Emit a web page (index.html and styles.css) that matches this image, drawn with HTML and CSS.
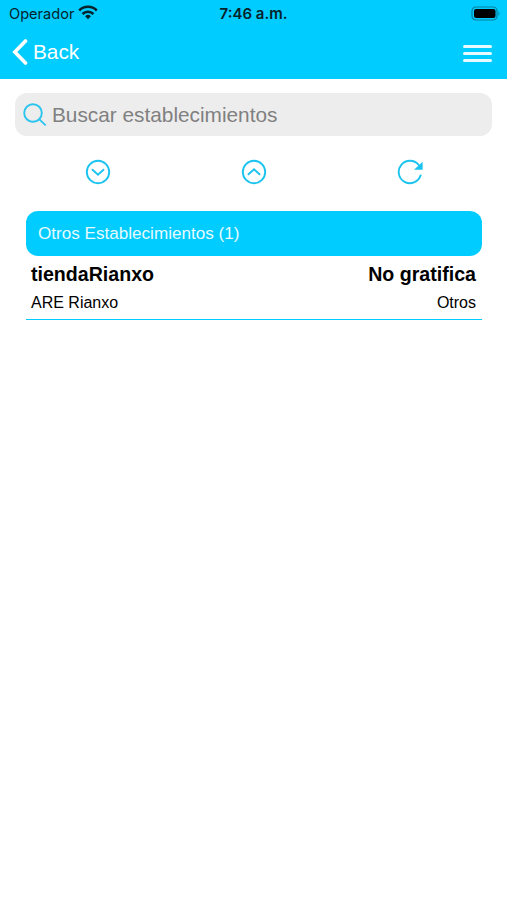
FILE: index.html
```html
<!DOCTYPE html>
<html lang="es">
<head>
    <meta charset="UTF-8">
    <meta name="viewport" content="width=device-width, initial-scale=1.0">
    <title>Establecimientos</title>
    <link rel="stylesheet" href="styles.css">
</head>
<body>

    <header class="header">
        <div class="status-bar">
            <div class="carrier">
                <span>Operador</span>
                <svg class="wifi" width="20" height="15" viewBox="0 0 20 15">
                    <g fill="none" stroke="#06222a" stroke-width="2.5">
                        <path d="M1.2 5.5a12.4 12.4 0 0 1 17.6 0"/>
                        <path d="M4.5 9a7.8 7.8 0 0 1 11 0"/>
                    </g>
                    <path d="M7.1 11.3a4.1 4.1 0 0 1 5.8 0L10 14.2z" fill="#06222a"/>
                </svg>
            </div>
            <div class="clock">7:46 a.m.</div>
            <svg class="battery" width="30" height="15" viewBox="0 0 30 15">
                <rect x="1" y="1" width="25" height="13" rx="4" fill="none" stroke="#087f9f" stroke-width="1.2"/>
                <rect x="3" y="3" width="21.5" height="9" rx="2" fill="#000"/>
                <path d="M27.5 5.2q2 2.3 0 4.6z" fill="#087f9f"/>
            </svg>
        </div>
        <nav class="nav-bar">
            <a class="back">
                <svg width="16" height="26" viewBox="0 0 16 26">
                    <path d="M13.5 2L2.8 13l10.7 11" fill="none" stroke="#fff" stroke-width="3.6" stroke-linecap="round"/>
                </svg>
                <span>Back</span>
            </a>
            <div class="menu">
                <span></span>
                <span></span>
                <span></span>
            </div>
        </nav>
    </header>

    <main class="content">
        <div class="search">
            <svg width="24" height="24" viewBox="0 0 24 24">
                <g fill="none" stroke="#2cc5ef" stroke-width="1.9">
                    <circle cx="10" cy="10" r="8.8"/>
                    <path d="M16.1 16.1l6.6 6.3"/>
                </g>
            </svg>
            <input type="text" placeholder="Buscar establecimientos">
        </div>

        <div class="actions">
            <svg width="26" height="26" viewBox="0 0 26 26">
                <circle cx="13" cy="13" r="11.2"/>
                <path d="M7.5 10.7l5.5 5.1 5.5-5.1"/>
            </svg>
            <svg width="26" height="26" viewBox="0 0 26 26">
                <circle cx="13" cy="13" r="11.2"/>
                <path d="M7.5 15.3l5.5-5.1 5.5 5.1"/>
            </svg>
            <svg width="26" height="26" viewBox="0 0 26 26">
                <path d="M23.6 16.4A11.2 11.2 0 1 1 21.6 5.9"/>
                <path class="arrow" d="M25.6 2.8v8h-8.6z"/>
            </svg>
        </div>

        <section class="group">
            <h2 class="group-title">Otros Establecimientos (1)</h2>
            <div class="shop">
                <div class="shop-row shop-name">
                    <span>tiendaRianxo</span>
                    <span>No gratifica</span>
                </div>
                <div class="shop-row shop-info">
                    <span>ARE Rianxo</span>
                    <span>Otros</span>
                </div>
            </div>
        </section>
    </main>

</body>
</html>
```
FILE: styles.css
```css
* {
    box-sizing: border-box;
}
body {
    margin: 0;
    background: white;
    color: black;
    font-family: "Liberation Sans", Arial, sans-serif;
}
svg {
    display: block;
    flex-shrink: 0;
}
.header {
    height: 79px;
    background: #00ccff;
}
.status-bar {
    display: grid;
    grid-template-columns: 1fr auto 1fr;
    align-items: center;
    height: 27px;
    padding: 0 6px 0 9px;
    font-family: Inter, sans-serif;
    font-size: 14.6px;
    color: #06222a;
}
.carrier {
    display: flex;
    align-items: center;
    gap: 4px;
}
.wifi {
    margin-top: -2px;
}
.clock {
    margin-right: 3px;
    font-weight: 600;
    font-size: 15px;
}
.battery {
    justify-self: end;
}
.nav-bar {
    display: flex;
    justify-content: space-between;
    align-items: center;
    height: 50px;
    padding: 0 15px 0 12px;
}
.back {
    display: flex;
    align-items: center;
    gap: 5px;
    font-size: 20.8px;
    color: white;
}
.menu {
    display: flex;
    flex-direction: column;
    gap: 4px;
    width: 29px;
    margin-top: 2px;
}
.menu span {
    height: 3px;
    border-radius: 2px;
    background: #e6faff;
}
.content {
    padding: 14px 15px 0;
}
.search {
    display: flex;
    align-items: center;
    gap: 5px;
    height: 43px;
    padding: 0 8px;
    border-radius: 12px;
    background: #ededed;
}
.search input {
    flex: 1;
    padding: 0;
    border: none;
    outline: none;
    background: none;
    font-family: inherit;
    font-size: 20.8px;
}
.search input::placeholder {
    color: #808080;
}
.actions {
    display: flex;
    justify-content: space-around;
    align-items: center;
    height: 72px;
    padding: 0 4px 0 5px;
}
.actions svg {
    fill: none;
    stroke: #1cc3ef;
    stroke-width: 1.9;
    stroke-linecap: round;
}
.actions .arrow {
    fill: #1cc3ef;
    stroke: none;
}
.group {
    margin: 3px 10px 0 11px;
}
.group-title {
    height: 45px;
    margin: 0;
    padding: 0 12px;
    border-radius: 12px;
    background: #00ccff;
    color: #e6faff;
    font-size: 17.1px;
    font-weight: normal;
    line-height: 45px;
}
.shop {
    padding: 4px 6px 0 5px;
    height: 64px;
    border-bottom: 1px solid #00ccff;
}
.shop-row {
    display: flex;
    justify-content: space-between;
}
.shop-name {
    font-size: 19.6px;
    font-weight: bold;
    line-height: 28px;
}
.shop-info {
    font-size: 16px;
    line-height: 30px;
}
```
